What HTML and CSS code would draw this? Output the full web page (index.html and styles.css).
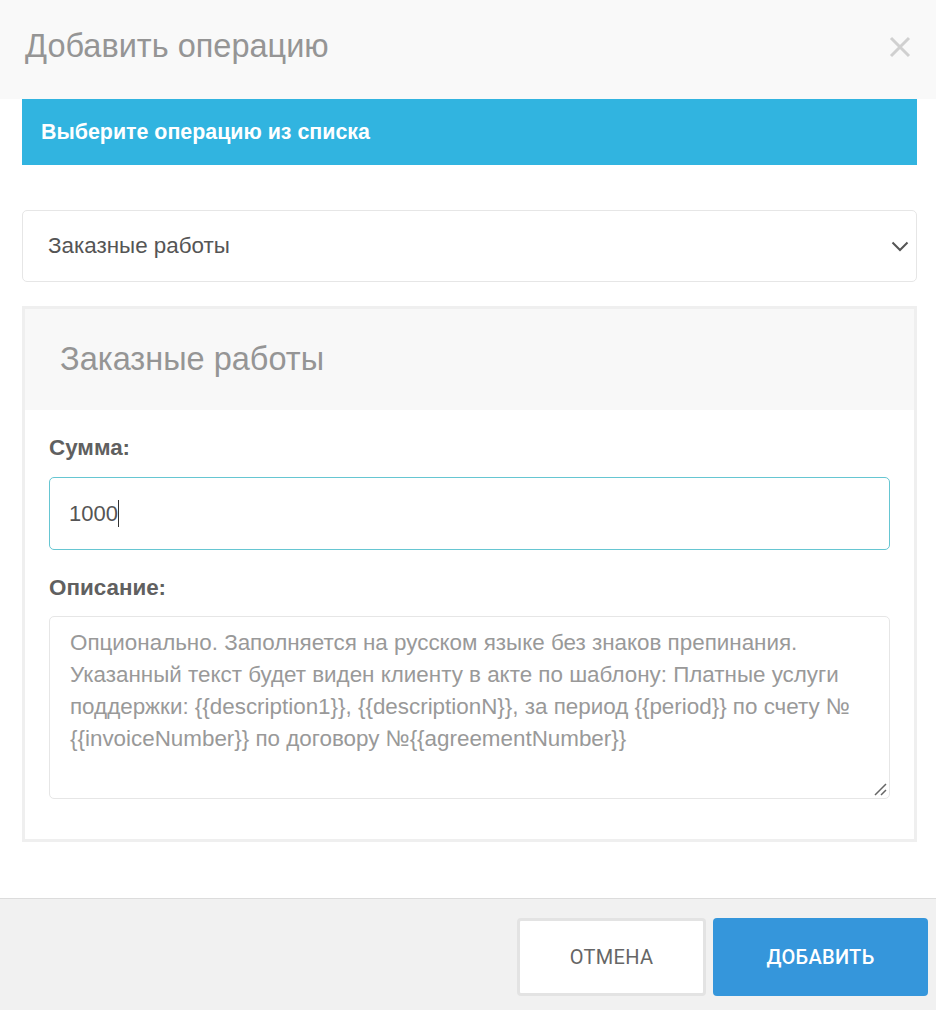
FILE: index.html
```html
<!DOCTYPE html>
<html lang="ru">
<head>
<meta charset="utf-8">
<title>Добавить операцию</title>
<link rel="stylesheet" href="styles.css">
</head>
<body>
<div class="modal">
  <div class="modal-header">
    <h1 class="modal-title">Добавить операцию</h1>
    <span class="close">
      <svg width="22" height="22" viewBox="0 0 22 22"><path d="M2 2 L20 20 M20 2 L2 20" stroke="#d0d0d0" stroke-width="3" fill="none"/></svg>
    </span>
  </div>
  <div class="modal-body">
    <div class="alert">Выберите операцию из списка</div>
    <div class="select">
      <span class="select-value">Заказные работы</span>
      <svg class="chevron" width="18" height="11" viewBox="0 0 18 11"><path d="M1.5 1.5 L9 9 L16.5 1.5" stroke="#555" stroke-width="2" fill="none"/></svg>
    </div>
    <div class="panel">
      <div class="panel-heading">Заказные работы</div>
      <div class="panel-body">
        <div class="label">Сумма:</div>
        <div class="input"><span>1000</span><span class="caret"></span></div>
        <div class="label label-desc">Описание:</div>
        <div class="textarea">
          <p class="placeholder">Опционально. Заполняется на русском языке без знаков препинания. Указанный текст будет виден клиенту в акте по шаблону: Платные услуги поддержки: {{description1}}, {{descriptionN}}, за период {{period}} по счету № {{invoiceNumber}} по договору №{{agreementNumber}}</p>
          <svg class="grip" width="14" height="14" viewBox="0 0 14 14"><path d="M2 13 L13 2 M8 13 L13 8" stroke="#666" stroke-width="1.5" fill="none"/></svg>
        </div>
      </div>
    </div>
  </div>
  <div class="modal-footer">
    <button class="btn btn-cancel">Отмена</button>
    <button class="btn btn-add">Добавить</button>
  </div>
</div>
</body>
</html>
```
FILE: styles.css
```css
html, body {
  margin: 0;
  padding: 0;
  background: #fff;
}
body {
  font-family: "Liberation Sans", Arial, sans-serif;
  color: #555;
}
.modal {
  width: 936px;
  height: 1010px;
  display: flex;
  flex-direction: column;
}
.modal-header {
  height: 99px;
  flex: none;
  background: #f9f9f9;
  display: flex;
  align-items: center;
  justify-content: space-between;
  padding: 0 25px 0 25px;
  box-sizing: border-box;
}
.modal-title {
  margin: 0;
  font-weight: normal;
  font-size: 32.5px;
  color: #959595;
  position: relative;
  top: -3px;
}
.close {
  display: flex;
  position: relative;
  top: -3px;
}
.modal-body {
  padding: 0 19px 0 22px;
  flex: 1;
}
.alert {
  height: 66px;
  background: #31b4e0;
  color: #fff;
  font-size: 21.4px;
  font-weight: bold;
  display: flex;
  align-items: center;
  padding-left: 19px;
  box-sizing: border-box;
}
.select {
  margin-top: 45px;
  height: 72px;
  border: 1px solid #e6e6e6;
  border-radius: 5px;
  display: flex;
  align-items: center;
  justify-content: space-between;
  padding: 0 6px 0 25px;
  box-sizing: border-box;
}
.select-value {
  font-size: 22.4px;
  color: #555;
}
.chevron {
  margin-right: 1px;
}
.panel {
  margin-top: 24px;
  height: 536px;
  border: 3px solid #efefef;
  box-sizing: border-box;
}
.panel-heading {
  height: 101px;
  background: #f8f8f8;
  display: flex;
  align-items: center;
  padding-left: 35px;
  font-size: 32.5px;
  color: #959595;
}
.panel-body {
  padding: 26px 24px 0 24px;
}
.label {
  font-size: 22.4px;
  font-weight: bold;
  color: #606060;
  line-height: 24px;
}
.input {
  margin-top: 17px;
  height: 73px;
  border: 1px solid #66c6d2;
  border-radius: 5px;
  box-sizing: border-box;
  display: flex;
  align-items: center;
  padding-left: 19px;
  font-size: 22px;
  color: #555;
}
.caret {
  display: inline-block;
  width: 1px;
  height: 27px;
  background: #333;
}
.label-desc {
  margin-top: 26px;
}
.textarea {
  margin-top: 16px;
  height: 183px;
  border: 1px solid #e6e6e6;
  border-radius: 5px;
  box-sizing: border-box;
  padding: 10px 20px 0 20px;
  position: relative;
}
.placeholder {
  margin: 0;
  font-size: 22.4px;
  line-height: 32px;
  color: #999;
}
.grip {
  position: absolute;
  right: 2px;
  bottom: 2px;
}
.modal-footer {
  height: 112px;
  flex: none;
  background: #f1f1f1;
  border-top: 1px solid #dcdcdc;
  box-sizing: border-box;
  display: flex;
  justify-content: flex-end;
  align-items: flex-start;
  padding: 19px 8px 0 0;
  gap: 7px;
}
.btn {
  height: 78px;
  font-family: Roboto, "Liberation Sans", sans-serif;
  font-size: 20px;
  text-transform: uppercase;
  letter-spacing: 0.3px;
  border-radius: 4px;
  cursor: pointer;
}
.btn-cancel {
  width: 189px;
  background: #fff;
  border: 3px solid #e3e3e3;
  color: #666;
}
.btn-add {
  width: 215px;
  background: #3596db;
  border: none;
  color: #fff;
  font-weight: 500;
}
```
